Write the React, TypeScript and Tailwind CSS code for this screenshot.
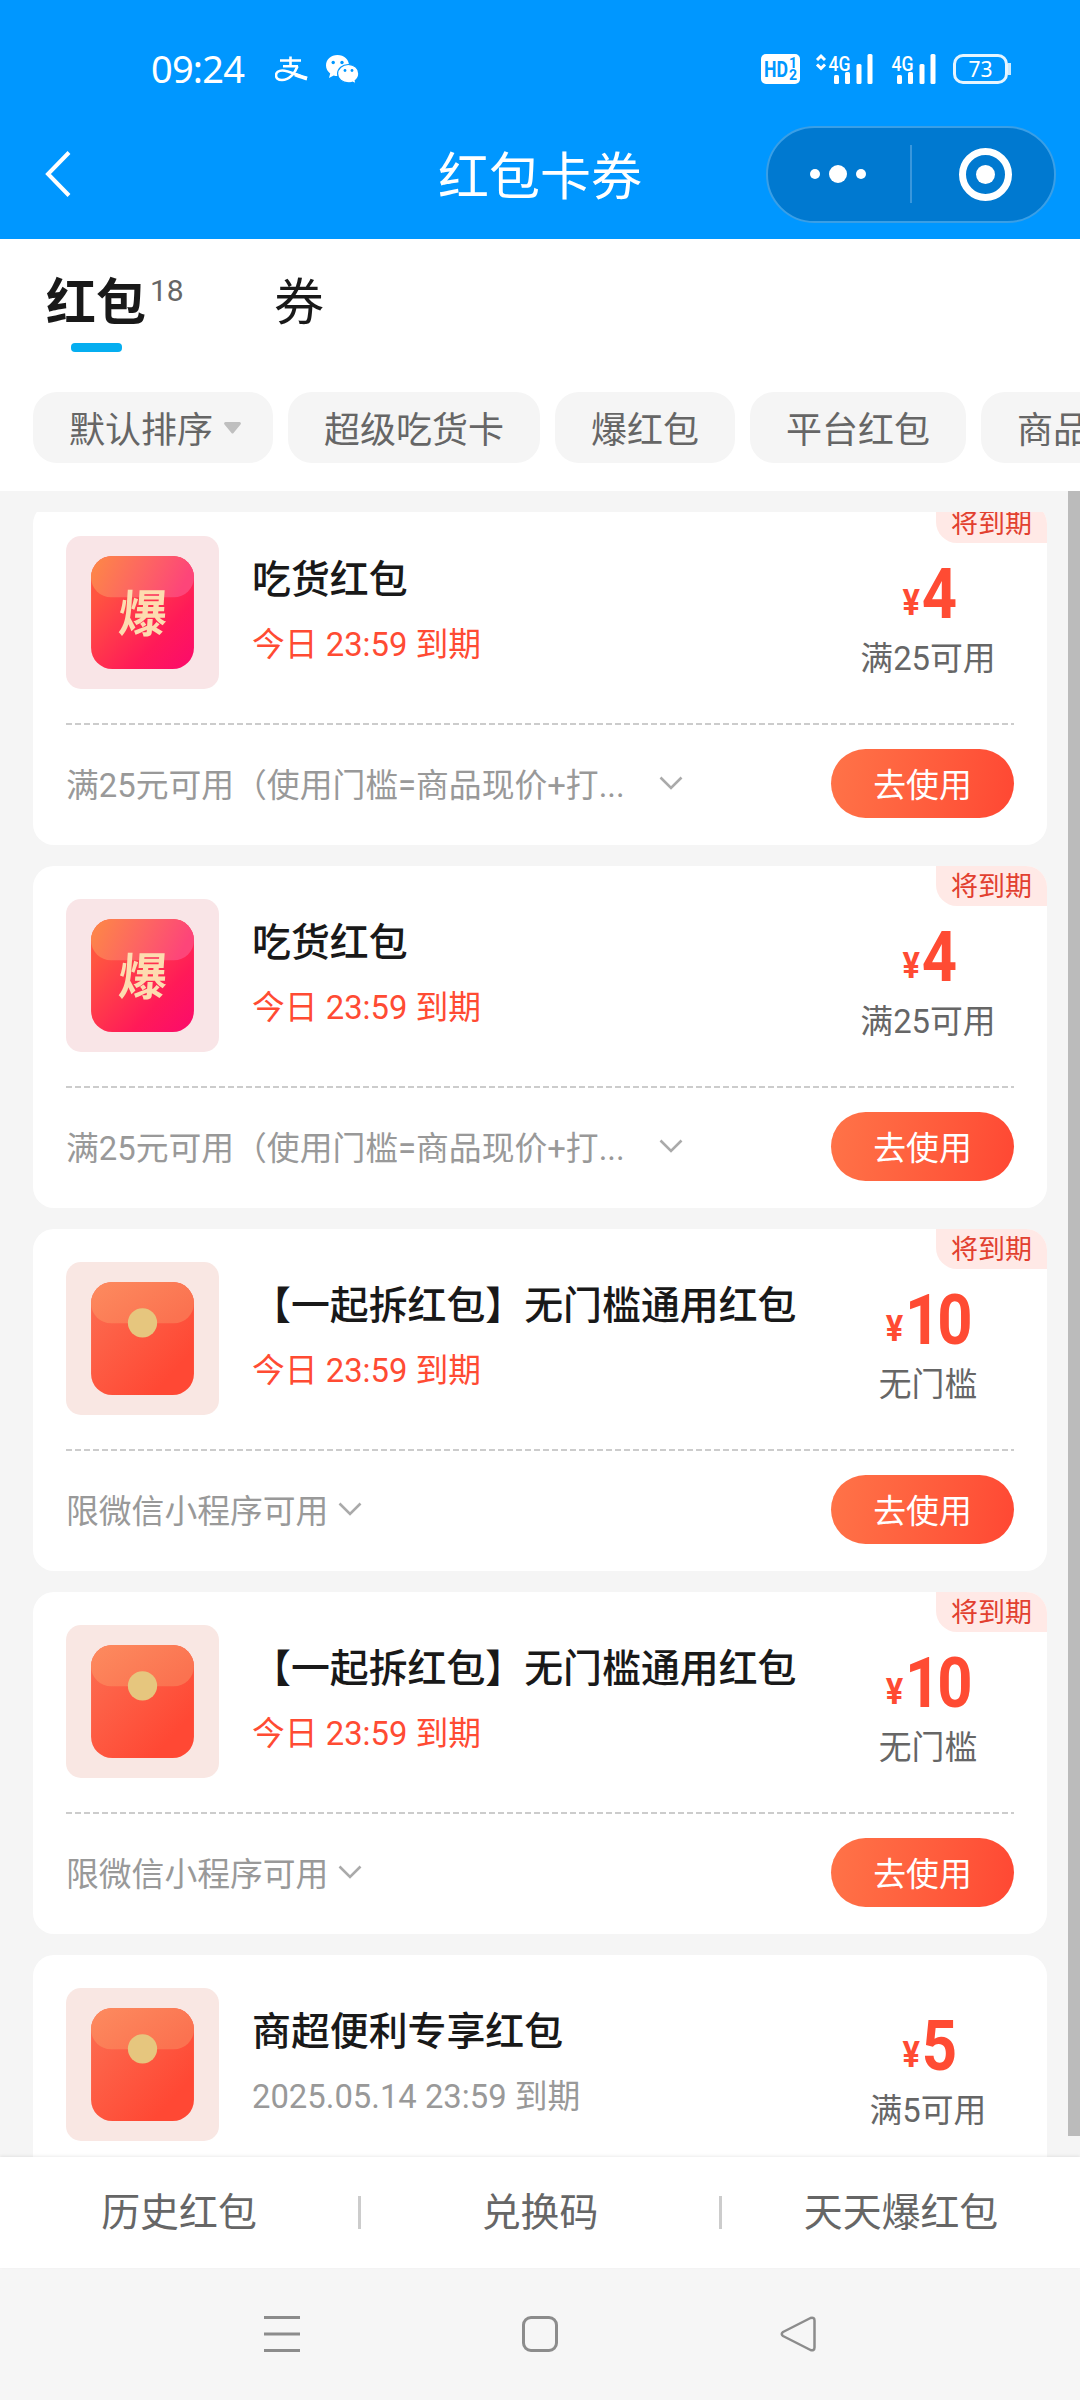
import type { ReactNode } from 'react';

type CouponIcon = 'burst' | 'packet';

interface Coupon {
  id: number;
  icon: CouponIcon;
  title: string;
  expires: string;
  amount: string;
  condition: string;
  rule?: string;
  wideRule?: boolean;
  expiring?: boolean;
}

const coupons: Coupon[] = [
  { id: 1, icon: 'burst', title: '吃货红包', expires: '今日 23:59 到期', amount: '4', condition: '满25可用', rule: '满25元可用（使用门槛=商品现价+打...', wideRule: true, expiring: true },
  { id: 2, icon: 'burst', title: '吃货红包', expires: '今日 23:59 到期', amount: '4', condition: '满25可用', rule: '满25元可用（使用门槛=商品现价+打...', wideRule: true, expiring: true },
  { id: 3, icon: 'packet', title: '【一起拆红包】无门槛通用红包', expires: '今日 23:59 到期', amount: '10', condition: '无门槛', rule: '限微信小程序可用', expiring: true },
  { id: 4, icon: 'packet', title: '【一起拆红包】无门槛通用红包', expires: '今日 23:59 到期', amount: '10', condition: '无门槛', rule: '限微信小程序可用', expiring: true },
  { id: 5, icon: 'packet', title: '商超便利专享红包', expires: '2025.05.14 23:59 到期', amount: '5', condition: '满5可用' },
];

const filters = ['超级吃货卡', '爆红包', '平台红包', '商品'];
const footerLinks = ['历史红包', '兑换码', '天天爆红包'];

function AlipayIcon() {
  return (
    <svg className="h-[26px] w-[33px]" viewBox="0 0 33 26" fill="none" stroke="currentColor" aria-hidden="true">
      <path strokeWidth={2.6} d="M5 4.5h21M8 10.2h15M15.5 0.5v9.5" />
      <path strokeWidth={2.6} d="M22.5 10.2C20 17 14.5 24 7 24c-4 0-6-2-6-4.6 0-3 2.8-4.9 6.3-4.9C14 14.5 21 19 32 22.5" />
      <path strokeWidth={4} d="M20 18.5c4 1.500 8 3 12 4" />
    </svg>
  );
}

function WechatIcon() {
  return (
    <svg className="h-[29px] w-[33px]" viewBox="0 0 33 29" aria-hidden="true">
      <path fill="#fff" d="M11.500 0C5 0 0 4.600 0 10.500c0 3.300 1.600 6 4.200 8L3 23l4.700-2.600c1.200.4 2.500.6 3.800.6C18 21 23 16.400 23 10.500S18 0 11.500 0z" />
      <path fill="#fff" stroke="#0097ff" strokeWidth={1.2} d="M22.300 9.500c6 0 10.500 4 10.500 9.200 0 2.800-1.400 5.200-3.600 7l.9 3.200-3.800-1.700c-1.200.4-2.600.6-4 .6-6 0-10.700-4-10.700-9.100s4.700-9.200 10.700-9.200z" />
      <g fill="#0097ff">
        <circle cx="7.200" cy="7.500" r="1.700" />
        <circle cx="16" cy="7.500" r="1.700" />
        <circle cx="19" cy="15.500" r="1.400" />
        <circle cx="26" cy="15.500" r="1.400" />
      </g>
    </svg>
  );
}

function Signal({ active }: { active?: boolean }) {
  return (
    <svg className={active ? 'h-[32px] w-[58px] overflow-visible' : 'h-[32px] w-[46px] overflow-visible'} viewBox={active ? '0 0 58 32' : '12 0 46 32'} aria-hidden="true">
      {active && <path fill="none" stroke="#fff" strokeWidth={3} d="M1 7l4-4 4 4M1 11.500l4 4 4-4" />}
      <text x="12.500" y="17.500" fill="#fff" fontSize="21" fontWeight="500" textLength="22" lengthAdjust="spacingAndGlyphs" className="font-['Roboto',sans-serif]">4G</text>
      <g fill="#fff">
        <rect x="18" y="22" width="5" height="9" rx="1.500" />
        <rect x="29" y="19" width="5" height="12" rx="1.500" />
        <rect x="40.500" y="11" width="5" height="20" rx="1.500" />
        <rect x="51.500" y="1" width="5" height="30" rx="1.500" />
      </g>
    </svg>
  );
}

function StatusBar() {
  return (
    <div className="flex h-[108px] items-center pt-[30px] pr-[69px] pl-[151px] text-white">
      <span className="-mt-[3px] font-['Noto_Sans',sans-serif] text-[38px] leading-none tracking-[-0.8px]">09:24</span>
      <div className="ml-[31px] flex items-center gap-[18px]">
        <AlipayIcon />
        <WechatIcon />
      </div>
      <div className="ml-auto flex items-center">
        <svg className="mr-[15px] h-[30px] w-[40px]" viewBox="0 0 40 30" aria-hidden="true">
          <rect width="39" height="30" rx="5" fill="#fff" />
          <g fill="#0097ff" className="font-['Roboto',sans-serif] font-bold">
            <text x="3" y="23" fontSize="22" textLength="24" lengthAdjust="spacingAndGlyphs">HD</text>
            <text x="28" y="14" fontSize="14">1</text>
            <text x="28" y="26" fontSize="14">2</text>
          </g>
        </svg>
        <Signal active />
        <div className="w-[17px]" />
        <Signal />
        <div className="ml-[16px] flex items-center">
          <div className="flex h-[30px] w-[55px] items-center justify-center rounded-[10px] border-[3px] border-white/90 font-['Noto_Sans',sans-serif] text-[21px] leading-none">73</div>
          <div className="h-[12px] w-[3px] bg-white/80" />
        </div>
      </div>
    </div>
  );
}

function NavBar() {
  return (
    <div className="grid h-[131px] grid-cols-[1fr_auto_1fr] items-center pt-[1px] text-white">
      <svg className="ml-[45px] h-[46px] w-[26px]" viewBox="0 0 26 46" fill="none" stroke="currentColor" strokeWidth={4} aria-hidden="true">
        <path d="M24 1.500L3 23l21 21.500" />
      </svg>
      <h1 className="pt-[6px] text-[51px] leading-none">红包卡券</h1>
      <div className="mr-[24px] flex h-[97px] w-[290px] items-center justify-self-end rounded-full border-2 border-[#3a9fe6] bg-[#0079d0]">
        <div className="flex w-[142px] items-center justify-center gap-[9px] pr-[2px]">
          <i className="size-[10px] rounded-full bg-white" />
          <i className="size-[18px] rounded-full bg-white" />
          <i className="size-[10px] rounded-full bg-white" />
        </div>
        <div className="h-[58px] w-[2px] bg-[#3a97dc]" />
        <div className="flex flex-1 items-center justify-center pl-[4px]">
          <div className="flex size-[53px] items-center justify-center rounded-full border-[7px] border-white">
            <i className="size-[19px] rounded-full bg-white" />
          </div>
        </div>
      </div>
    </div>
  );
}

function Tabs() {
  return (
    <div className="flex h-[153px] pt-[38px] pl-[46px] text-[#191919]">
      <div className="flex w-[228px] items-start">
        <div className="flex flex-col items-center">
          <span className="text-[50px] leading-[52px] font-bold">红包</span>
          <span className="mt-[14px] h-[9px] w-[51px] rounded-[4px] bg-[#05aef0]" />
        </div>
        <span className="-mt-[1px] ml-[4px] text-[30px] leading-none text-[#666]">18</span>
      </div>
      <span className="text-[50px] leading-[52px]">券</span>
    </div>
  );
}

function Chip({ children }: { children: ReactNode }) {
  return (
    <div className="flex h-[71px] shrink-0 items-center rounded-[24px] bg-[#f5f5f5] px-[36px] text-[36px] leading-none text-[#666]">
      {children}
    </div>
  );
}

function FilterRow() {
  return (
    <div className="flex h-[99px] items-start gap-[15px] overflow-hidden pl-[33px]">
      <Chip>
        <span className="pt-[7px]">默认排序</span>
        <svg className="-mr-[4px] ml-[11px] h-[12px] w-[17px]" viewBox="0 0 17 12" aria-hidden="true">
          <path fill="#bfbfbf" d="M1.500 0h14a1.500 1.500 0 011 2.500l-7 8.500a1.400 1.400 0 01-2 0l-7-8.500a1.500 1.500 0 011-2.500z" />
        </svg>
      </Chip>
      {filters.map((label) => (
        <Chip key={label}>
          <span className="pt-[7px]">{label}</span>
        </Chip>
      ))}
    </div>
  );
}

function PacketIcon({ icon }: { icon: CouponIcon }) {
  const isBurst = icon === 'burst';
  return (
    <div className={`flex size-[153px] shrink-0 items-center justify-center rounded-[15px] ${isBurst ? 'bg-[#f9e5e7]' : 'bg-[#f9e7e3]'}`}>
      <svg className="h-[113px] w-[103px]" viewBox="0 0 102 112" aria-hidden="true">
        <defs>
          <linearGradient id="burst-body" x1="0" y1="0" x2="1" y2="1">
            <stop offset="0.2" stopColor="#ff5540" />
            <stop offset="0.7" stopColor="#ff1a58" />
            <stop offset="1" stopColor="#fb0a6c" />
          </linearGradient>
          <linearGradient id="burst-flap" x1="0" y1="0" x2="1" y2="0.2">
            <stop offset="0" stopColor="#fd8a45" />
            <stop offset="0.55" stopColor="#fd6562" />
            <stop offset="1" stopColor="#fd4579" />
          </linearGradient>
          <linearGradient id="packet-body" x1="0" y1="0" x2="1" y2="1">
            <stop offset="0.1" stopColor="#fc6b4f" />
            <stop offset="0.8" stopColor="#ff4834" />
          </linearGradient>
          <linearGradient id="packet-flap" x1="0" y1="0" x2="1" y2="0.6">
            <stop offset="0" stopColor="#fd8b5f" />
            <stop offset="1" stopColor="#fb7250" />
          </linearGradient>
        </defs>
        <rect width="102" height="112" rx="21" fill={isBurst ? 'url(#burst-body)' : 'url(#packet-body)'} />
        <path d="M21 0h60a21 21 0 0121 21a20 20 0 01-20 20H20A20 20 0 010 21 21 21 0 0121 0z" fill={isBurst ? 'url(#burst-flap)' : 'url(#packet-flap)'} />
        {isBurst ? (
          <text x="51" y="75" fill="#fddcb0" fontSize="50" fontWeight="700" textAnchor="middle" textLength="48" lengthAdjust="spacingAndGlyphs" transform="translate(4.500 0) skewX(-4)">爆</text>
        ) : (
          <circle cx="51" cy="40.500" r="14.500" fill="#e6c67e" />
        )}
      </svg>
    </div>
  );
}

function CouponCard({ coupon }: { coupon: Coupon }) {
  return (
    <article className="relative h-[342px] shrink-0 rounded-[21px] bg-white px-[33px] pt-[33px]">
      {coupon.expiring && (
        <div className="absolute top-0 right-0 flex h-[40px] w-[111px] items-center justify-center rounded-tr-[21px] rounded-bl-[21px] bg-[#ffe9e6] pt-[3px] text-[27px] leading-none text-[#e2402f]">
          将到期
        </div>
      )}
      <div className="flex h-[187px]">
        <PacketIcon icon={coupon.icon} />
        <div className="ml-[33px] flex-1 pt-[19px]">
          <h2 className="text-[38.9px] leading-[50px] font-medium whitespace-nowrap text-[#191919]">{coupon.title}</h2>
          <p className={`mt-[17px] text-[32.8px] leading-[46px] ${coupon.expiring ? 'text-[#ff4b33]' : 'text-[#999]'}`}>{coupon.expires}</p>
        </div>
        <div className="flex w-[173px] flex-col items-center pl-[1px]">
          <div className="flex h-[83px] origin-center scale-x-[0.88] items-baseline pt-[23px] leading-[70px] font-bold text-[#ff4b33]">
            <span className="relative -top-[3px] mr-[2px] text-[37px]">¥</span>
            <span className="text-[70px] tracking-[-3.500px]">{coupon.amount}</span>
          </div>
          <p className="mt-[17px] text-[32.8px] leading-[46px] whitespace-nowrap text-[#666]">{coupon.condition}</p>
        </div>
      </div>
      {coupon.rule && (
        <>
          <div className="h-[2px] bg-[repeating-linear-gradient(90deg,#ccc_0_6px,transparent_6px_9px)]" />
          <div className="mt-[24px] flex h-[69px] items-center justify-between">
            <div className="flex items-center text-[32.8px] leading-none whitespace-nowrap text-[#999]">
              <span className={coupon.wideRule ? 'w-[593px] pt-[6px]' : 'mr-[10px] pt-[6px]'}>{coupon.rule}</span>
              <svg className="h-[15px] w-[24px]" viewBox="0 0 24 15" fill="none" stroke="#aaa" strokeWidth={2.6} aria-hidden="true">
                <path d="M1.500 1.500L12 12 22.500 1.500" />
              </svg>
            </div>
            <button type="button" className="h-[69px] w-[183px] rounded-full bg-linear-100 from-[#ff7348] to-[#ff4733] pt-[6px] text-[32.8px] leading-none text-white">
              去使用
            </button>
          </div>
        </>
      )}
    </article>
  );
}

function CouponList() {
  return (
    <main className="relative h-[1666px] bg-[#f5f5f5] pt-[21px] pl-[33px]">
      <div className="flex h-[1645px] w-[1014px] flex-col overflow-hidden">
        <div className="-mt-[9px] flex flex-col gap-[21px]">
          {coupons.map((coupon) => (
            <CouponCard key={coupon.id} coupon={coupon} />
          ))}
        </div>
      </div>
      <div className="absolute top-0 right-0 h-[1645px] w-[12px] bg-[#bbb]" />
    </main>
  );
}

function FooterLinks() {
  return (
    <footer className="relative flex h-[111px] items-center bg-white text-[38.9px] leading-none text-[#666] shadow-[0_-1px_3px_rgba(0,0,0,0.08)]">
      {footerLinks.map((label, index) => (
        <div key={label} className={`flex h-[33px] flex-1 items-center justify-center ${index < footerLinks.length - 1 ? 'border-r-[3px] border-[#ccc]' : ''}`}>
          <span className="pt-[2px]">{label}</span>
        </div>
      ))}
    </footer>
  );
}

function SystemNav() {
  return (
    <nav className="flex h-[132px] items-center justify-center gap-[222px] bg-[#f6f6f6]">
      <svg className="size-[36px]" viewBox="0 0 36 36" stroke="#8c8c8c" strokeWidth={3} aria-hidden="true">
        <path d="M0 1.500h36M0 18h36M0 34.500h36" />
      </svg>
      <div className="size-[36px] rounded-[9px] border-[3px] border-[#8c8c8c]" />
      <svg className="size-[36px]" viewBox="0 0 36 36" fill="none" stroke="#8c8c8c" strokeWidth={2.5} strokeLinejoin="round" aria-hidden="true">
        <path d="M30.500 2L3 16q-2.500 2 0 4l27.500 14q4 1 4-2.500V4.500q0-3.500-4-2.500z" />
      </svg>
    </nav>
  );
}

export default function App() {
  return (
    <div className="flex h-[2400px] w-[1080px] flex-col overflow-hidden bg-white font-['Roboto','Noto_Sans_CJK_SC',sans-serif]">
      <header className="h-[239px] bg-[#0097ff]">
        <StatusBar />
        <NavBar />
      </header>
      <Tabs />
      <FilterRow />
      <CouponList />
      <FooterLinks />
      <SystemNav />
    </div>
  );
}
